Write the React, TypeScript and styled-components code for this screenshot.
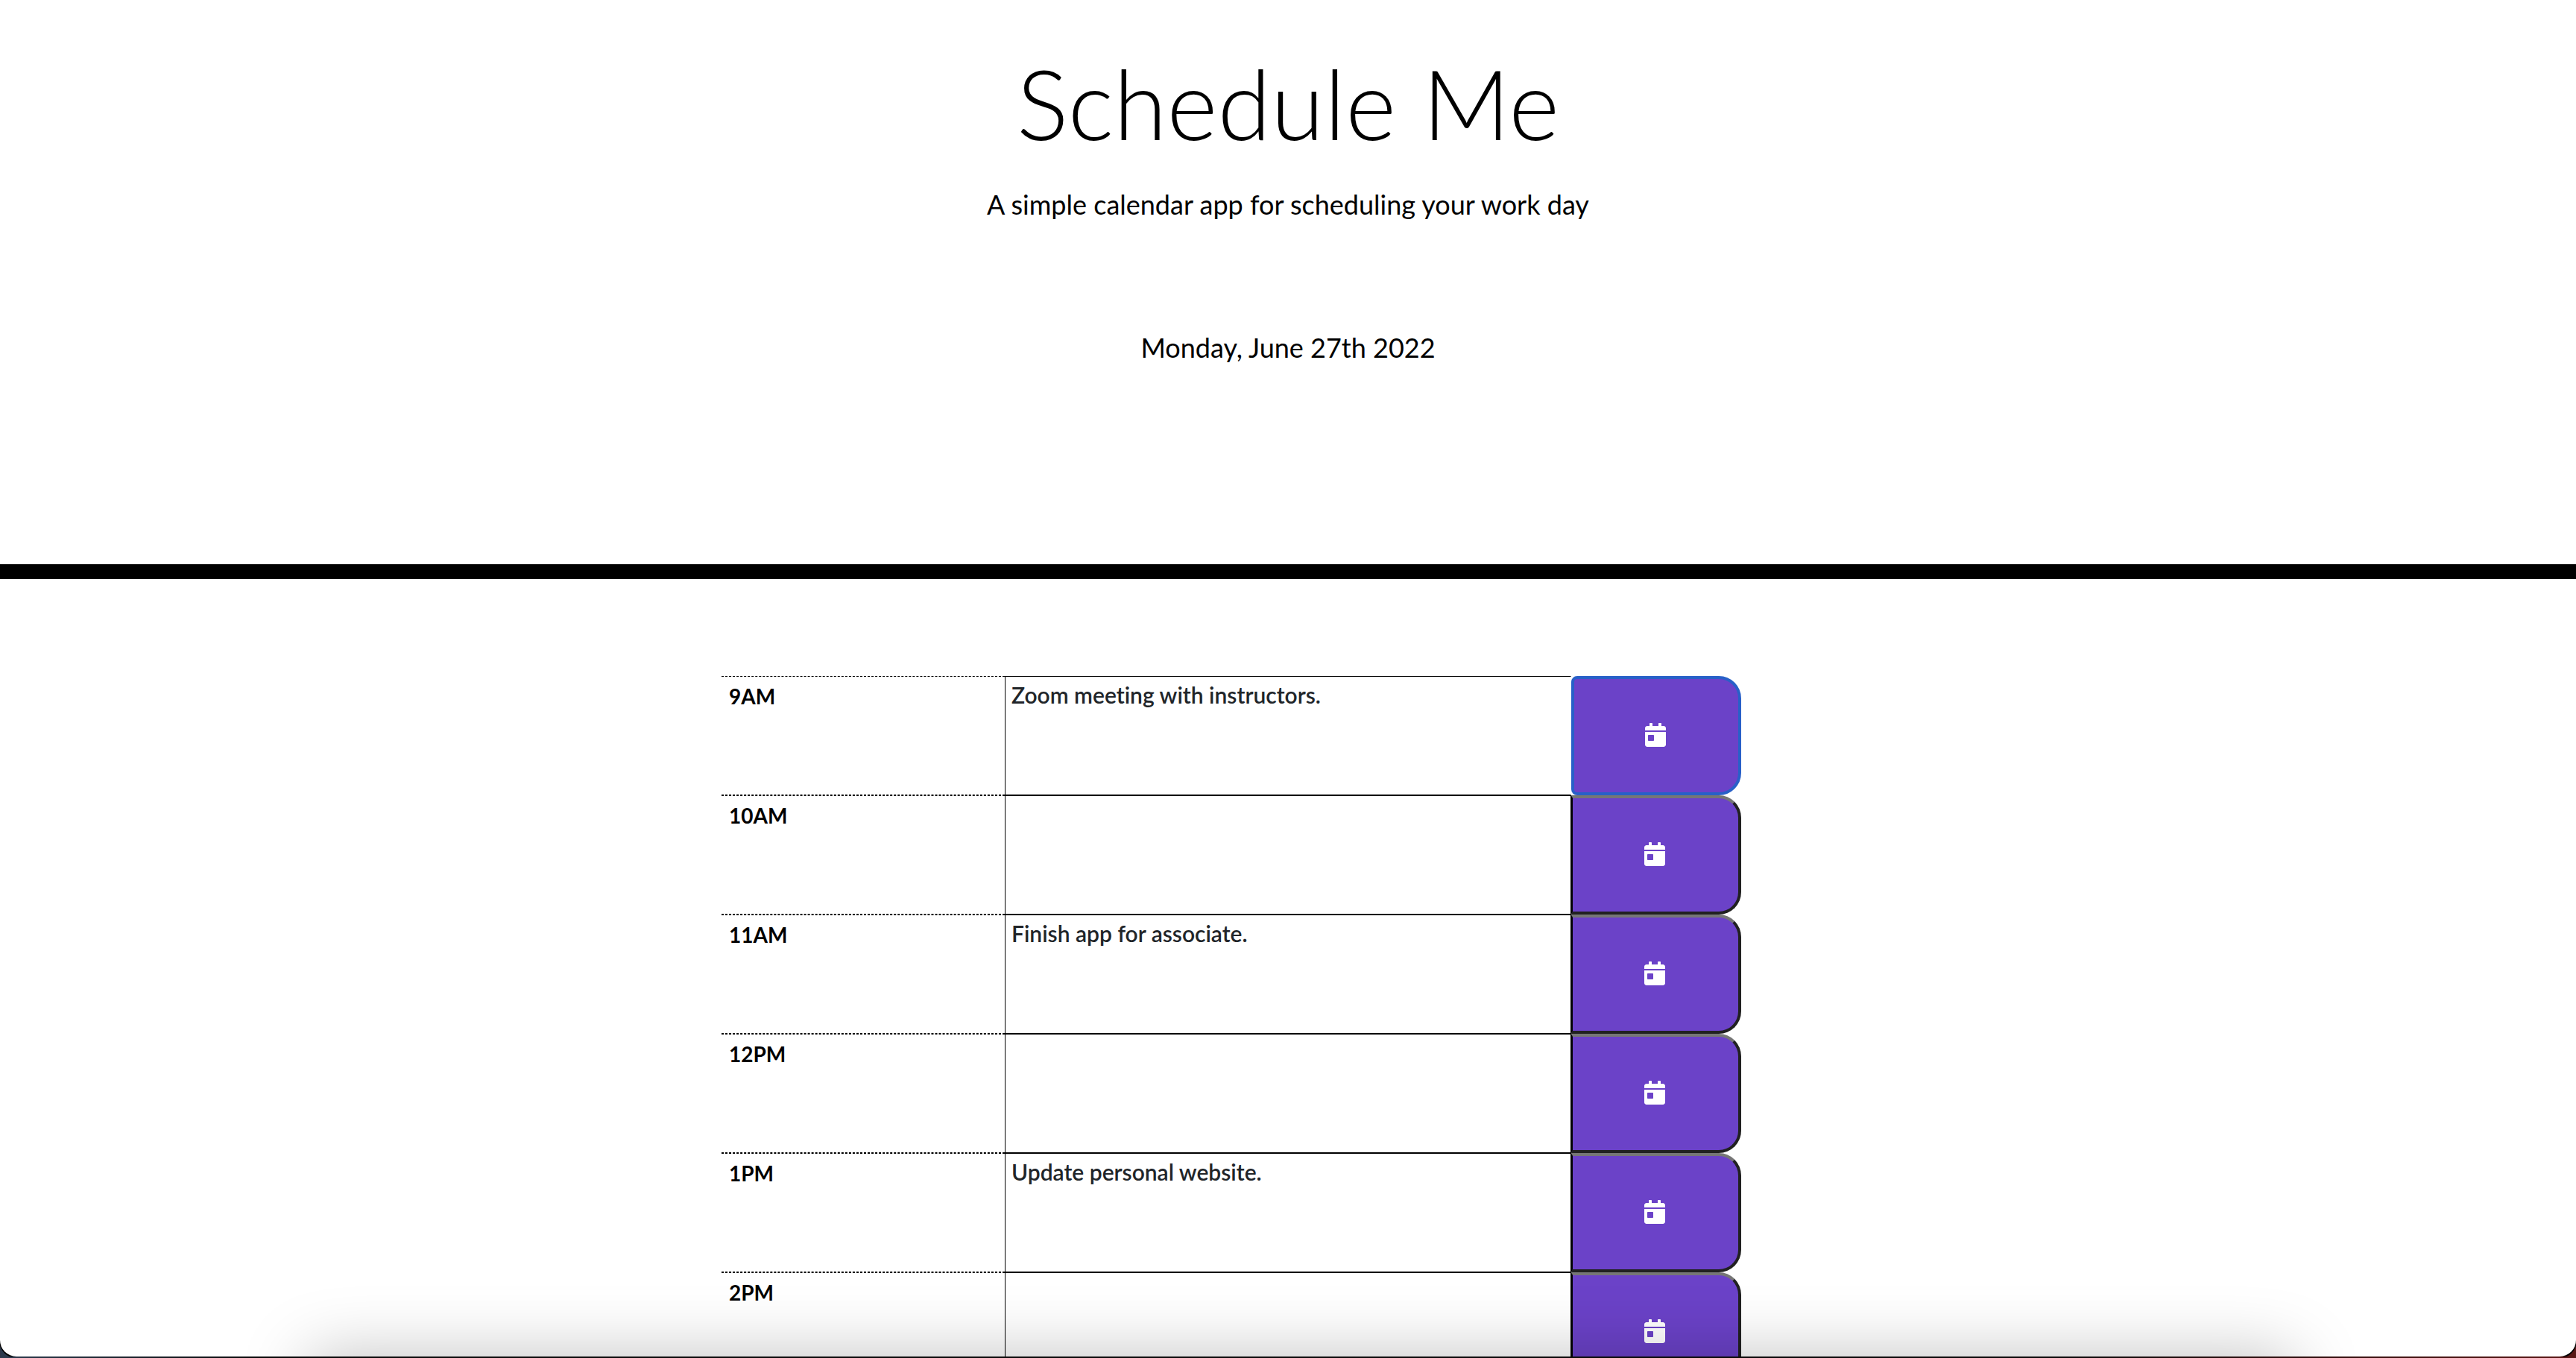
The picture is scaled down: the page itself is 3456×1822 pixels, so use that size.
import React from "react";
import styled, { createGlobalStyle } from "styled-components";
import { FaCalendarDay } from "react-icons/fa";

const GlobalStyle = createGlobalStyle`
  *, *::before, *::after { box-sizing: border-box; }
  body {
    margin: 0;
    background: linear-gradient(90deg, #2b3a4d 0, #0a0a0a 10%, #0a0808 80%, #5a1614 100%);
    font-family: "Gill Sans", Lato, "Open Sans", sans-serif;
    font-variant-ligatures: none;
    color: #000;
    overflow: hidden;
  }
`;

const Window = styled.div`
  height: calc(100vh - 2px);
  overflow: hidden;
  background: #fff;
  border-radius: 0 0 22px 22px;
  box-shadow: 0 1px 0 1px #000;
`;

const Header = styled.header`
  display: flex;
  flex-direction: column;
  align-items: center;
  padding: 62px 32px 261px;
  border-bottom: 20px solid #000;
  text-align: center;
`;

const Title = styled.h1`
  margin: 0 0 30px;
  font-size: 130px;
  line-height: 152px;
  font-weight: 300;
`;

const Lead = styled.p`
  margin: 0;
  font-size: 36px;
  line-height: 60px;
  font-weight: 400;
`;

const Today = styled(Lead)`
  margin-top: 132px;
`;

const Planner = styled.main`
  max-width: 2280px;
  margin: 130px auto 0;
`;

const HourRow = styled.form`
  display: grid;
  grid-template-columns: 2fr 2fr 4fr 1.2fr 2.8fr;
  min-height: 160px;
`;

const Hour = styled.label`
  grid-column: 2;
  padding: 8px 10px;
  border-top: 1px dashed #000;
  border-bottom: 1px dashed #000;
  font-size: 28px;
  line-height: 36px;
  font-weight: 700;
`;

const Task = styled.textarea<{ $saved: boolean }>`
  width: 100%;
  padding: 6px 8px;
  border: 1px solid #000;
  border-right-color: ${(p) => (p.$saved ? "transparent" : "#000")};
  border-radius: 0;
  background: transparent;
  color: #212529;
  font-family: inherit;
  font-size: 30px;
  line-height: 36px;
  font-weight: 600;
  font-variant-ligatures: none;
  resize: none;
  overflow: hidden;
  outline: none;
`;

const SaveButton = styled.button<{ $saved: boolean }>`
  display: flex;
  align-items: center;
  justify-content: center;
  padding: 0 2px 2px 0;
  background: #6b42c8;
  color: #fff;
  font-size: 32px;
  border-style: solid;
  border-width: ${(p) => (p.$saved ? "4px" : "4px 4px 4px 2px")};
  border-color: ${(p) => (p.$saved ? "#2860c8" : "#767676 #212121 #212121 #000")};
  border-radius: ${(p) => (p.$saved ? "8px 30px 30px 8px" : "0 30px 30px 0")};
  cursor: pointer;
`;

const CalendarIcon = styled(FaCalendarDay)`
  width: 28px;
  height: 32px;
`;

const DockShadow = styled.div`
  position: fixed;
  top: calc(100vh - 2px);
  left: 12%;
  right: 11%;
  height: 200px;
  pointer-events: none;
  box-shadow: 0 0 90px rgba(0, 0, 0, 0.25);
`;

const hours = [
  { id: "9", label: "9AM", task: "Zoom meeting with instructors.", saved: true },
  { id: "10", label: "10AM", task: "", saved: false },
  { id: "11", label: "11AM", task: "Finish app for associate.", saved: false },
  { id: "12", label: "12PM", task: "", saved: false },
  { id: "13", label: "1PM", task: "Update personal website.", saved: false },
  { id: "14", label: "2PM", task: "", saved: false },
];

export default function App() {
  return (
    <>
      <GlobalStyle />
      <Window>
        <Header>
          <Title>Schedule Me</Title>
          <Lead>A simple calendar app for scheduling your work day</Lead>
          <Today>Monday, June 27th 2022</Today>
        </Header>
        <Planner>
          {hours.map((hour) => (
            <HourRow key={hour.id} onSubmit={(event) => event.preventDefault()}>
              <Hour htmlFor={`task-${hour.id}`}>{hour.label}</Hour>
              <Task id={`task-${hour.id}`} defaultValue={hour.task} $saved={hour.saved} />
              <SaveButton type="submit" aria-label={`Save ${hour.label}`} $saved={hour.saved}>
                <CalendarIcon aria-hidden="true" />
              </SaveButton>
            </HourRow>
          ))}
        </Planner>
      </Window>
      <DockShadow aria-hidden="true" />
    </>
  );
}
